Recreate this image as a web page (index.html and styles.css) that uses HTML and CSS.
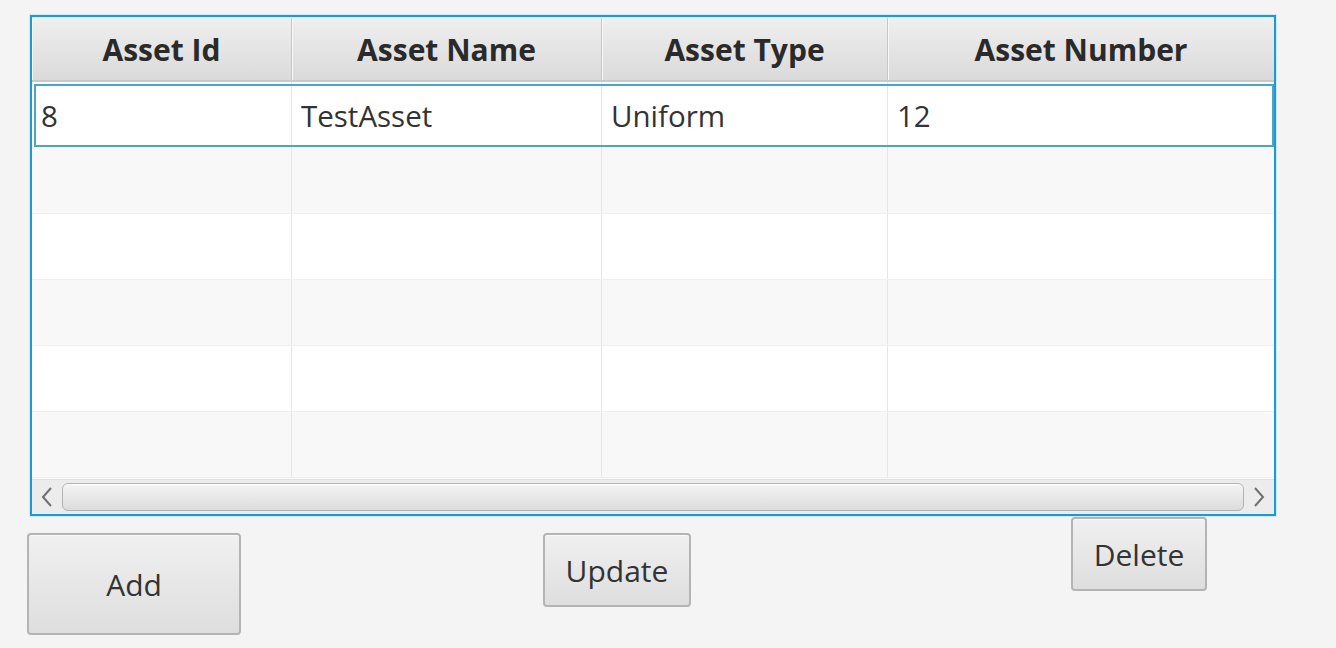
FILE: index.html
```html
<!DOCTYPE html>
<html>
<head>
<meta charset="utf-8">
<link rel="stylesheet" href="styles.css">
</head>
<body>
<div class="page">
  <div class="table">
    <div class="header">
      <div class="hcell">Asset Id</div>
      <div class="hcell">Asset Name</div>
      <div class="hcell">Asset Type</div>
      <div class="hcell last">Asset Number</div>
    </div>
    <div class="body">
      <div class="row selected">
        <div class="cell">8</div>
        <div class="cell">TestAsset</div>
        <div class="cell">Uniform</div>
        <div class="cell last">12</div>
      </div>
      <div class="row odd"><div class="cell"></div><div class="cell"></div><div class="cell"></div><div class="cell last"></div></div>
      <div class="row"><div class="cell"></div><div class="cell"></div><div class="cell"></div><div class="cell last"></div></div>
      <div class="row odd"><div class="cell"></div><div class="cell"></div><div class="cell"></div><div class="cell last"></div></div>
      <div class="row"><div class="cell"></div><div class="cell"></div><div class="cell"></div><div class="cell last"></div></div>
      <div class="row odd"><div class="cell"></div><div class="cell"></div><div class="cell"></div><div class="cell last"></div></div>
    </div>
    <div class="scrollbar">
      <div class="arrow">
        <svg width="12" height="22" viewBox="0 0 12 22"><polyline points="10,2 2,11 10,20" fill="none" stroke="#6f6f6f" stroke-width="2"/></svg>
      </div>
      <div class="track"><div class="thumb"></div></div>
      <div class="arrow">
        <svg width="12" height="22" viewBox="0 0 12 22"><polyline points="2,2 10,11 2,20" fill="none" stroke="#6f6f6f" stroke-width="2"/></svg>
      </div>
    </div>
  </div>
  <div class="buttons">
    <button class="btn btn-add">Add</button>
    <button class="btn btn-update">Update</button>
    <button class="btn btn-delete">Delete</button>
  </div>
</div>
</body>
</html>
```
FILE: styles.css
```css
html, body {
  margin: 0;
  padding: 0;
  background: #f4f4f4;
}
body {
  font-family: "Open Sans", "Noto Sans", sans-serif;
  color: #333333;
}
.page {
  padding: 15px 0 0 30px;
}
.table {
  width: 1246px;
  height: 501px;
  box-sizing: border-box;
  border: 2px solid #1a9bd3;
  box-shadow: 0 0 0 1px #cfe8f4;
  background: #f9f9f9;
  display: flex;
  flex-direction: column;
}
.header {
  display: grid;
  grid-template-columns: 260px 310px 286px 1fr;
  height: 65px;
  box-sizing: border-box;
  border-top: 1px solid #e8f2f7;
  border-bottom: 2px solid #c9c9c9;
  background: linear-gradient(#efefef, #dadada);
}
.hcell {
  display: flex;
  align-items: center;
  justify-content: center;
  font-weight: 700;
  font-size: 30px;
  color: #2a2a2a;
  border-right: 1px solid #c6c6c6;
  box-shadow: inset 1px 0 0 #f8f8f8;
}
.hcell.last {
  border-right: none;
}
.body {
  flex: 1;
  display: flex;
  flex-direction: column;
}
.row {
  display: grid;
  grid-template-columns: 260px 310px 286px 1fr;
  height: 66px;
  box-sizing: border-box;
  background: #ffffff;
  border-bottom: 1px solid #efefef;
  position: relative;
}
.row.odd {
  background: #f8f8f8;
}
.row.selected {
  background: #ffffff;
  border-bottom: none;
}
.row.selected::after {
  content: "";
  position: absolute;
  left: 2px;
  right: 0;
  top: 2px;
  bottom: 1px;
  border: 2px solid #4aa6c8;
  pointer-events: none;
}
.cell {
  display: flex;
  align-items: center;
  padding-left: 9px;
  font-size: 29.5px;
  color: #333333;
  border-right: 1px solid #e6e6e6;
}
.cell.last {
  border-right: none;
}
.scrollbar {
  height: 35px;
  display: flex;
  align-items: center;
  background: #ececec;
  border-top: 1px solid #e0e0e0;
  box-sizing: border-box;
}
.arrow {
  width: 30px;
  display: flex;
  justify-content: center;
  align-items: center;
}
.track {
  flex: 1;
  height: 28px;
}
.thumb {
  height: 100%;
  box-sizing: border-box;
  border: 1px solid #b3b3b3;
  border-radius: 6px;
  background: linear-gradient(#f4f4f4, #dcdcdc);
  box-shadow: inset 0 1px 0 #ffffff;
}
.buttons {
  display: flex;
  align-items: flex-start;
  margin-left: -3px;
  margin-top: 1px;
}
.btn {
  font-family: "Open Sans", "Noto Sans", sans-serif;
  font-size: 30px;
  color: #333333;
  border: 2px solid #b4b4b4;
  border-radius: 4px;
  background: linear-gradient(#f0f0f0, #dedede);
  box-shadow: inset 0 1px 0 #fafafa;
  padding: 0;
  box-sizing: border-box;
}
.btn-add {
  width: 214px;
  height: 102px;
  margin-top: 16px;
}
.btn-update {
  width: 148px;
  height: 74px;
  margin-top: 16px;
  margin-left: 302px;
}
.btn-delete {
  width: 136px;
  height: 74px;
  margin-left: 380px;
}
```
